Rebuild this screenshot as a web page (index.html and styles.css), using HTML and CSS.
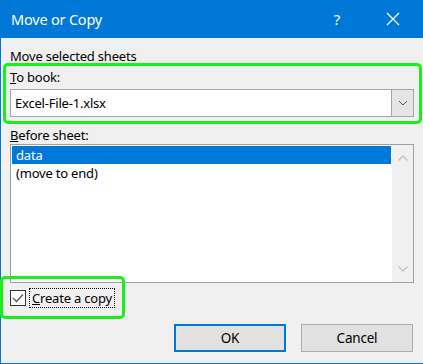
FILE: index.html
```html
<!DOCTYPE html>
<html lang="en">
<head>
    <meta charset="UTF-8">
    <title>Move or Copy</title>
    <link rel="stylesheet" href="styles.css">
</head>
<body>

<div class="window">
    <div class="titlebar">
        <span class="title">Move or Copy</span>
        <span class="help">?</span>
        <svg class="close" width="14" height="14" viewBox="0 0 14 14">
            <path d="M1 1 L13 13 M13 1 L1 13" stroke="#fff" stroke-width="1.2" fill="none"/>
        </svg>
    </div>

    <div class="content">
        <div class="label first">Move selected sheets</div>

        <div class="highlight book">
            <div class="label"><u>T</u>o book:</div>
            <div class="combo">
                <span class="combo-text">Excel-File-1.xlsx</span>
                <span class="combo-btn">
                    <svg width="10" height="6" viewBox="0 0 10 6">
                        <path d="M1 1 L5 5 L9 1" stroke="#555" stroke-width="1" fill="none"/>
                    </svg>
                </span>
            </div>
        </div>

        <div class="label before"><u>B</u>efore sheet:</div>
        <div class="listbox">
            <div class="items">
                <div class="item selected">data</div>
                <div class="item">(move to end)</div>
            </div>
            <div class="scrollbar">
                <svg width="10" height="6" viewBox="0 0 10 6">
                    <path d="M0.5 5.5 L5 1 L9.5 5.5" stroke="#c2c2c2" stroke-width="1.4" fill="none"/>
                </svg>
                <svg width="10" height="6" viewBox="0 0 10 6">
                    <path d="M0.5 0.5 L5 5 L9.5 0.5" stroke="#c2c2c2" stroke-width="1.4" fill="none"/>
                </svg>
            </div>
        </div>

        <div class="highlight copy">
            <span class="checkbox">
                <svg width="12" height="10" viewBox="0 0 12 10">
                    <path d="M1 5 L4.5 8.5 L11 1.5" stroke="#555" stroke-width="1.3" fill="none"/>
                </svg>
            </span>
            <span class="focus"><u>C</u>reate a copy</span>
        </div>

        <div class="buttons">
            <button class="btn default">OK</button>
            <button class="btn">Cancel</button>
        </div>
    </div>
</div>
<div class="taskbar">
    <span class="sep one"></span>
    <span class="sep two"></span>
</div>

</body>
</html>
```

FILE: styles.css
```css
body {
    margin: 0;
    width: 423px;
    height: 364px;
    overflow: hidden;
    background: #f0f0f0;
    font-family: 'Noto Sans', 'Open Sans', sans-serif;
    font-size: 13px;
    letter-spacing: -0.2px;
    color: #000;
}

.window {
    border-left: 1px solid #0078d7;
    border-bottom: 1px solid #0078d7;
    background: #f0f0f0;
}

.titlebar {
    height: 38px;
    background: #0078d7;
    color: #fff;
    display: flex;
    align-items: center;
    padding-left: 10px;
}

.title {
    font-size: 14.5px;
    flex: 1;
}

.help {
    font-size: 15px;
    margin-right: 46px;
}

.close {
    margin-right: 23px;
}

.content {
    padding: 8px 9px 11px 9px;
}

.label {
    line-height: 20px;
    height: 20px;
}

.highlight {
    border: 3px solid #1cee1c;
    border-radius: 5px;
    position: relative;
}

.book {
    margin: -3px -8px 0 -7px;
    padding: 1px 5px 4px 4px;
}

.combo {
    margin-top: 2px;
    height: 26px;
    border: 1px solid #a5a5a5;
    background: #fff;
    display: flex;
    align-items: center;
}

.combo-text {
    flex: 1;
    padding-left: 4px;
}

.combo-btn {
    width: 21px;
    height: 26px;
    background: #e5e5e5;
    border-left: 1px solid #a5a5a5;
    display: flex;
    align-items: center;
    justify-content: center;
}

.before {
    margin-top: 1px;
}

.listbox {
    margin-top: -1px;
    height: 137px;
    border: 1px solid #a0a0a0;
    background: #fff;
    display: flex;
}

.items {
    flex: 1;
    padding: 1px;
}

.item {
    height: 18px;
    line-height: 18px;
    padding-left: 4px;
}

.item.selected {
    background: #0078d7;
    color: #fff;
}

.scrollbar {
    width: 21px;
    background: #f0f0f0;
    display: flex;
    flex-direction: column;
    justify-content: space-between;
    align-items: center;
    padding: 10px 0 10px 0;
}

.copy {
    margin: -7px 0 0 -10px;
    width: 112px;
    height: 37px;
    padding-left: 7px;
    display: flex;
    align-items: center;
}

.checkbox {
    width: 14px;
    height: 14px;
    border: 1px solid #333;
    background: #fff;
    display: flex;
    align-items: center;
    justify-content: center;
}

.focus {
    margin-left: 3px;
    border: 1px dotted #000;
    padding: 0 2px;
    line-height: 18px;
}

.buttons {
    margin-top: 5px;
    display: flex;
    justify-content: flex-end;
    gap: 15px;
    padding-right: 1px;
}

.btn {
    width: 112px;
    height: 28px;
    font-family: inherit;
    font-size: 13.5px;
    letter-spacing: -0.2px;
    background: #e1e1e1;
    border: 1px solid #adadad;
    color: #000;
    padding: 0;
}

.btn.default {
    border: 2px solid #0078d7;
}

.taskbar {
    height: 2px;
    background: #e0e0e0;
    position: relative;
}

.sep {
    position: absolute;
    top: 0;
    width: 1px;
    height: 2px;
    background: #a0a0a0;
}

.sep.one { left: 62px; }
.sep.two { left: 192px; }
```
